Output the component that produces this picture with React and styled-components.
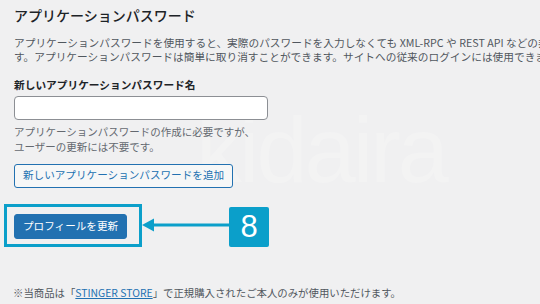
import React from 'react';
import styled, { createGlobalStyle } from 'styled-components';

const GlobalStyle = createGlobalStyle`
	html, body {
		margin: 0;
		padding: 0;
		background: #f0f0f1;
	}
	body {
		font-family: "Noto Sans CJK JP", "Noto Sans", sans-serif;
		color: #3c434a;
	}
`;

const accent = '#0b9fca';
const wpBlue = '#2271b1';

const Page = styled.div`
	position: relative;
	width: 540px;
	height: 304px;
	overflow: hidden;
	box-sizing: border-box;
	padding: 5px 0 0 14px;
`;

const Content = styled.div`
	position: relative;
	z-index: 1;
`;

// faint site watermark sitting behind the form
const Watermark = styled.div`
	position: absolute;
	z-index: 0;
	left: 196px;
	top: 104px;
	font-family: "Liberation Sans", Arial, sans-serif;
	font-size: 92px;
	letter-spacing: -3px;
	color: rgba(255, 255, 255, 0.2);
	pointer-events: none;
	line-height: 1;
`;

const Title = styled.h2`
	margin: 0;
	font-size: 14px;
	font-weight: 500;
	line-height: 20px;
	color: #1d2327;
`;

const Intro = styled.p`
	margin: 11px 0 0;
	font-size: 10.7px;
	line-height: 14px;
	white-space: nowrap;
	color: #50575e;
`;

const Label = styled.label`
	display: block;
	margin-top: 13px;
	font-size: 10.7px;
	font-weight: 700;
	line-height: 16px;
	color: #1d2327;
`;

const TextInput = styled.input`
	display: block;
	margin-top: 3px;
	width: 254px;
	height: 24px;
	box-sizing: border-box;
	border: 1px solid #8c8f94;
	border-radius: 4px;
	background: #fff;
`;

const Description = styled.p`
	margin: 4px 0 0;
	font-size: 10.5px;
	line-height: 15px;
	color: #646970;
`;

const Button = styled.button`
	display: block;
	box-sizing: border-box;
	height: ${p => (p.$primary ? '25px' : '24px')};
	padding: 0 8px;
	border-radius: 3px;
	font-family: inherit;
	font-size: 10.6px;
	line-height: 1;
	white-space: nowrap;
	cursor: pointer;
	border: 1px solid ${wpBlue};
	background: ${p => (p.$primary ? wpBlue : '#f6f7f7')};
	color: ${p => (p.$primary ? '#fff' : wpBlue)};
`;

const AddButton = styled(Button)`
	margin-top: 9.5px;
`;

const Callout = styled.div`
	display: flex;
	align-items: center;
	margin: 16px 0 0 -10px;
`;

const Highlight = styled.div`
	box-sizing: border-box;
	width: 138px;
	height: 43px;
	padding: 7px 0 0 7px;
	border: 3px solid ${accent};
`;

const Arrow = styled.svg`
	display: block;
	flex: none;
`;

const Badge = styled.div`
	display: flex;
	align-items: center;
	justify-content: center;
	width: 40px;
	height: 40px;
	margin-top: 3px;
	border-radius: 2px;
	background: ${accent};
	color: #fff;
	font-family: "Liberation Sans", Arial, sans-serif;
	font-size: 31px;
`;

const Footer = styled.p`
	margin: 39px 0 0 -1px;
	font-size: 10.4px;
	line-height: 14px;
	white-space: nowrap;
	color: #50575e;
`;

const Link = styled.a`
	color: ${wpBlue};
	text-decoration: underline;
`;

export default function App() {
	return (
		<>
			<GlobalStyle />
			<Page>
				<Watermark aria-hidden="true">kidaira</Watermark>
				<Content>
					<Title>アプリケーションパスワード</Title>
					<Intro>
						アプリケーションパスワードを使用すると、実際のパスワードを入力しなくても XML-RPC や REST API などの非対話型システムを使って認証できるようになりま<br />
						す。アプリケーションパスワードは簡単に取り消すことができます。サイトへの従来のログインには使用できません。
					</Intro>
					<Label htmlFor="new-app-pass">新しいアプリケーションパスワード名</Label>
					<TextInput id="new-app-pass" type="text" />
					<Description>
						アプリケーションパスワードの作成に必要ですが、<br />
						ユーザーの更新には不要です。
					</Description>
					<AddButton>新しいアプリケーションパスワードを追加</AddButton>
					<Callout>
						<Highlight>
							<Button $primary>プロフィールを更新</Button>
						</Highlight>
						<Arrow width="87" height="14" viewBox="0 0 87 14">
							<polygon points="0,7 12,0.5 12,13.5" fill={accent} />
							<rect x="11" y="5.5" width="76" height="3" fill={accent} />
						</Arrow>
						<Badge>8</Badge>
					</Callout>
					<Footer>
						※当商品は「<Link href="#">STINGER STORE</Link>」で正規購入されたご本人のみが使用いただけます。
					</Footer>
				</Content>
			</Page>
		</>
	);
}
